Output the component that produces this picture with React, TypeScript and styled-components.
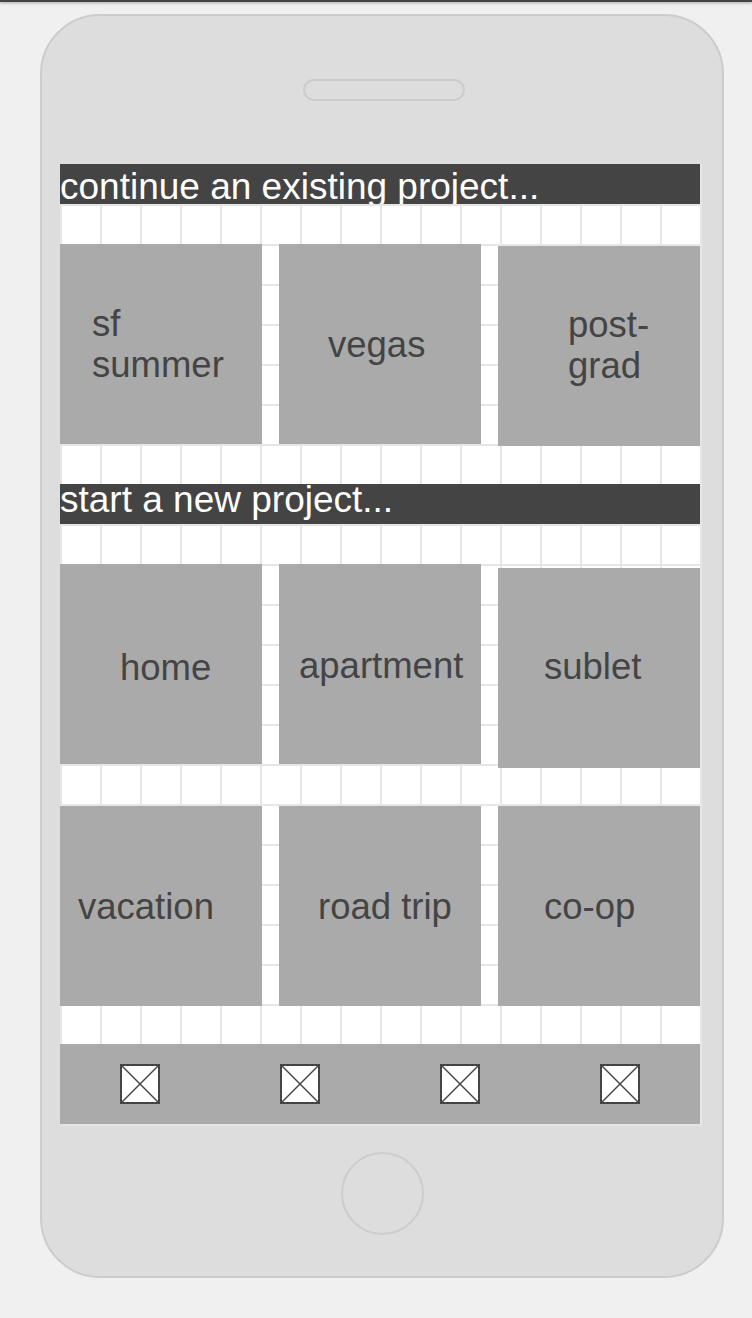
import styled, { createGlobalStyle } from "styled-components";

interface TileItem {
  label: string;
  inset: number;
  drop?: number;
  nudge?: number;
}

const existing: TileItem[] = [
  { label: "sf\nsummer", inset: 32 },
  { label: "vegas", inset: 49 },
  { label: "post-\ngrad", inset: 70, drop: 2, nudge: -1 },
];

const fresh: TileItem[][] = [
  [
    { label: "home", inset: 60, nudge: 3 },
    { label: "apartment", inset: 20, nudge: 1 },
    { label: "sublet", inset: 46, drop: 4, nudge: -2 },
  ],
  [
    { label: "vacation", inset: 18, drop: 2 },
    { label: "road trip", inset: 39, drop: 2 },
    { label: "co-op", inset: 46, drop: 2 },
  ],
];

const PlaceholderIcon = () => (
  <svg width="40" height="40" viewBox="0 0 40 40">
    <rect x="1" y="1" width="38" height="38" fill="#fff" stroke="#444" strokeWidth="2" />
    <line x1="2" y1="2" x2="38" y2="38" stroke="#444" strokeWidth="1.4" />
    <line x1="38" y1="2" x2="2" y2="38" stroke="#444" strokeWidth="1.4" />
  </svg>
);

const TileRow = ({ items }: { items: TileItem[] }) => (
  <Row>
    {items.map((item) => (
      <Tile key={item.label} $inset={item.inset} $drop={item.drop ?? 0}>
        <Label $nudge={item.nudge ?? 0}>{item.label}</Label>
      </Tile>
    ))}
  </Row>
);

const App: React.FC = () => {
  return (
    <>
      <GlobalStyle />
      <TopBar />
      <Phone>
        <Speaker />
        <Screen>
          <Header $lift={8} $clip>
            continue an existing project...
          </Header>
          <Spacer />
          <TileRow items={existing} />
          <Spacer />
          <Header $lift={1}>start a new project...</Header>
          <Spacer />
          <TileRow items={fresh[0]} />
          <Spacer />
          <TileRow items={fresh[1]} />
          <Spacer />
          <NavBar>
            {[0, 1, 2, 3].map((i) => (
              <NavSlot key={i}>
                <PlaceholderIcon />
              </NavSlot>
            ))}
          </NavBar>
        </Screen>
        <HomeButton />
      </Phone>
    </>
  );
};

export default App;

const GlobalStyle = createGlobalStyle`
  html, body {
    margin: 0;
    padding: 0;
    background: #f0f0f0;
    font-family: "Liberation Sans", Arial, sans-serif;
  }
  body {
    width: 752px;
    height: 1318px;
    overflow: hidden;
  }
`;

const TopBar = styled.div`
  height: 2px;
  background: #444;
  box-shadow: 0 1px 3px rgba(0, 0, 0, 0.35);
`;

const Phone = styled.div`
  width: 684px;
  height: 1264px;
  box-sizing: border-box;
  margin: 12px 0 0 40px;
  border: 2px solid #ccc;
  border-radius: 60px;
  background: #ddd;
  display: flex;
  flex-direction: column;
  align-items: center;
  padding-top: 63px;
`;

const Speaker = styled.div`
  width: 162px;
  height: 22px;
  box-sizing: border-box;
  border: 2px solid #ccc;
  border-radius: 11px;
  background: #ddd;
  margin: 0 0 63px 4px;
`;

const Screen = styled.div`
  align-self: flex-start;
  margin-left: 18px;
  width: 640px;
  height: 960px;
  padding: 0 2px 2px 0;
  background-color: #fff;
  background-image: linear-gradient(to right, #e6e6e6 2px, transparent 2px),
    linear-gradient(to bottom, #e6e6e6 2px, transparent 2px);
  background-size: 40px 40px;
  display: flex;
  flex-direction: column;
`;

const Header = styled.div<{ $lift: number; $clip?: boolean }>`
  width: 640px;
  height: 40px;
  flex: none;
  box-sizing: border-box;
  padding-top: ${(p) => p.$lift}px;
  background: #444;
  color: #fff;
  font-size: 37px;
  line-height: 30px;
  white-space: nowrap;
  overflow: ${(p) => (p.$clip ? "hidden" : "visible")};
`;

const Spacer = styled.div`
  height: 40px;
  flex: none;
`;

const Row = styled.div`
  width: 640px;
  height: 200px;
  flex: none;
  display: flex;
  justify-content: space-between;
  align-items: flex-start;
`;

const Tile = styled.div<{ $inset: number; $drop: number }>`
  width: 202px;
  height: 200px;
  margin-top: ${(p) => p.$drop}px;
  box-sizing: border-box;
  padding-left: ${(p) => p.$inset}px;
  background: #aaa;
  display: flex;
  align-items: center;
`;

const Label = styled.span<{ $nudge: number }>`
  color: #444;
  font-size: 36.5px;
  line-height: 41px;
  white-space: pre-line;
  margin-top: ${(p) => Math.max(0, p.$nudge * 2)}px;
  margin-bottom: ${(p) => Math.max(0, -p.$nudge * 2)}px;
`;

const NavBar = styled.div`
  width: 640px;
  height: 80px;
  flex: none;
  background: #aaa;
  display: grid;
  grid-template-columns: repeat(4, 160px);
`;

const NavSlot = styled.div`
  display: flex;
  align-items: center;
  justify-content: center;
  svg {
    display: block;
  }
`;

const HomeButton = styled.div`
  width: 83px;
  height: 83px;
  box-sizing: border-box;
  margin-top: 26px;
  border: 2px solid #ccc;
  border-radius: 50%;
  background: #ddd;
`;
